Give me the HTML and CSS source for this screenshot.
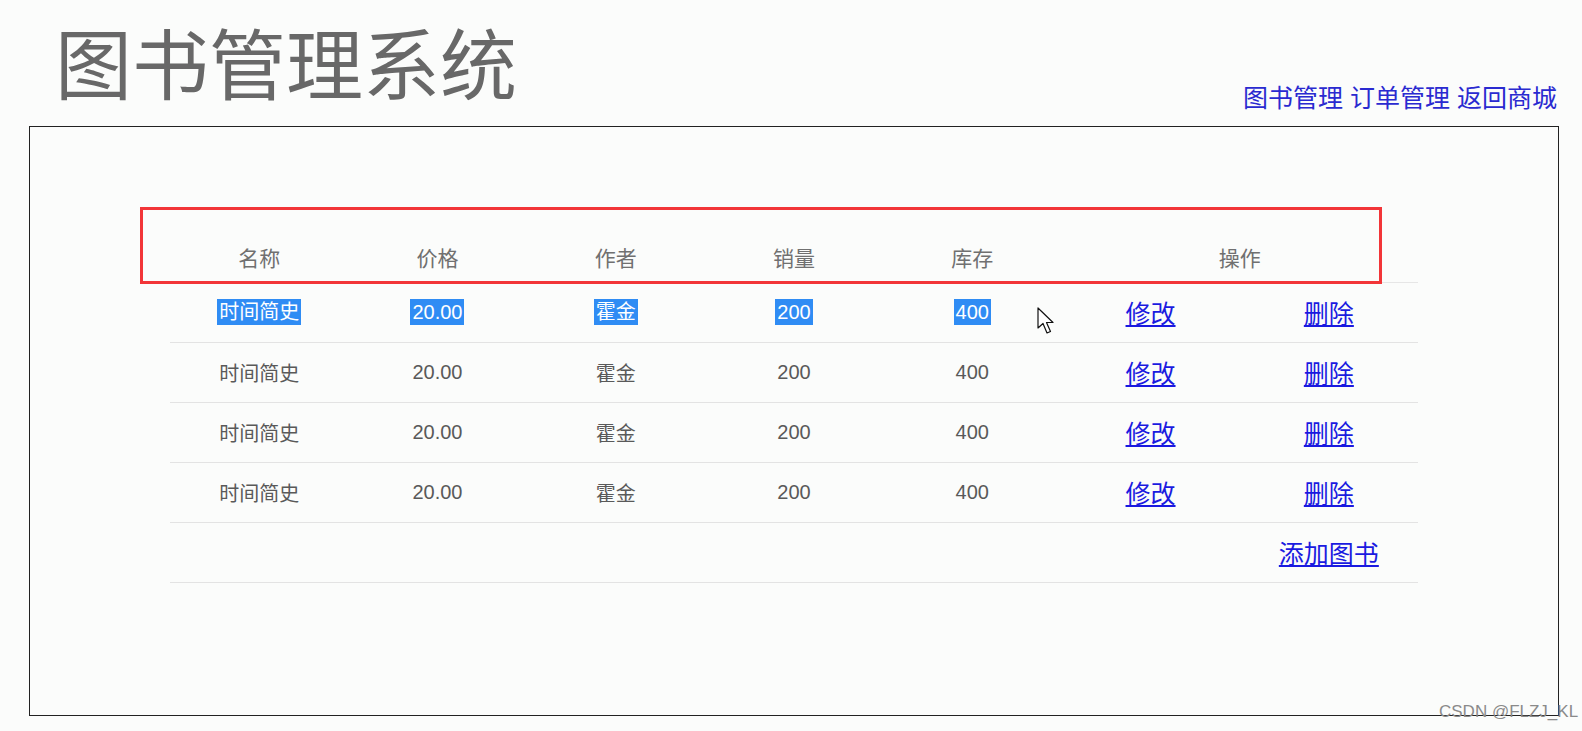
FILE: index.html
```html
<!DOCTYPE html>
<html lang="zh">
<head>
    <meta charset="UTF-8">
    <title>图书管理系统</title>
    <link rel="stylesheet" href="styles.css">
</head>
<body>
    <div class="header">
        <h1 class="title">图书管理系统</h1>
        <div class="nav">
            <a href="#">图书管理</a> <a href="#">订单管理</a> <a href="#">返回商城</a>
        </div>
    </div>
    <div class="panel">
        <table class="book-table">
            <tr>
                <th>名称</th>
                <th>价格</th>
                <th>作者</th>
                <th>销量</th>
                <th>库存</th>
                <th colspan="2">操作</th>
            </tr>
            <tr class="selected">
                <td><span>时间简史</span></td>
                <td><span>20.00</span></td>
                <td><span>霍金</span></td>
                <td><span>200</span></td>
                <td><span>400</span></td>
                <td><a href="#">修改</a></td>
                <td><a href="#">删除</a></td>
            </tr>
            <tr>
                <td>时间简史</td>
                <td>20.00</td>
                <td>霍金</td>
                <td>200</td>
                <td>400</td>
                <td><a href="#">修改</a></td>
                <td><a href="#">删除</a></td>
            </tr>
            <tr>
                <td>时间简史</td>
                <td>20.00</td>
                <td>霍金</td>
                <td>200</td>
                <td>400</td>
                <td><a href="#">修改</a></td>
                <td><a href="#">删除</a></td>
            </tr>
            <tr>
                <td>时间简史</td>
                <td>20.00</td>
                <td>霍金</td>
                <td>200</td>
                <td>400</td>
                <td><a href="#">修改</a></td>
                <td><a href="#">删除</a></td>
            </tr>
            <tr>
                <td colspan="6"></td>
                <td><a href="#">添加图书</a></td>
            </tr>
        </table>
        <!-- 标注框和鼠标 -->
        <div class="mark-box"></div>
        <svg class="cursor" width="19" height="28" viewBox="0 0 19 28">
            <path d="M1 1 L1 21 L6 16.5 L10 26 L13.5 24.5 L9.5 15.5 L16 15.5 Z" fill="#fff" stroke="#111" stroke-width="1.2" stroke-linejoin="round"/>
        </svg>
    </div>
    <div class="watermark">CSDN @FLZJ_KL</div>
</body>
</html>
```

FILE: styles.css
```css
* {
    box-sizing: border-box;
}
body {
    margin: 0;
    background: #fbfcfb;
    font-family: "Liberation Sans", "Noto Sans CJK SC", sans-serif;
    position: relative;
    height: 731px;
    overflow: hidden;
}
.header {
    display: flex;
    justify-content: space-between;
    align-items: flex-end;
    height: 126px;
    padding: 0 25px 0 55px;
}
.title {
    margin: 0 0 27px 0;
    font-size: 77px;
    line-height: 1;
    font-weight: normal;
    color: #686868;
    font-family: "Noto Sans CJK SC", sans-serif;
}
.nav {
    font-size: 25px;
    line-height: 1;
    margin-bottom: 15px;
}
.nav a {
    color: #2a2ad0;
    text-decoration: none;
}
.panel {
    position: relative;
    margin-left: 29px;
    width: 1530px;
    height: 590px;
    border: 1px solid #222;
    padding: 105px 0 0 140px;
}
.book-table {
    width: 1248px;
    border-collapse: collapse;
    table-layout: fixed;
    color: #595959;
    font-size: 20px;
}
.book-table th {
    font-weight: normal;
    font-size: 21px;
    color: #707070;
    height: 50px;
    padding: 0;
    border-bottom: 1px solid #e6e6e6;
}
.book-table td {
    height: 60px;
    padding: 0;
    text-align: center;
    border-bottom: 1px solid #e3e3e3;
}
.book-table a {
    color: #1a1ae0;
    font-size: 25px;
}
.selected span {
    display: inline-block;
    background: #2f8cf4;
    color: #fff;
    line-height: 26px;
    padding: 0 2px;
}
.mark-box {
    position: absolute;
    left: 110px;
    top: 80px;
    width: 1242px;
    height: 77px;
    border: 3px solid #f23538;
}
.cursor {
    position: absolute;
    left: 1007px;
    top: 180px;
}
.watermark {
    position: absolute;
    left: 1439px;
    top: 702px;
    font-size: 17px;
    color: #8a8a8a;
}
```
